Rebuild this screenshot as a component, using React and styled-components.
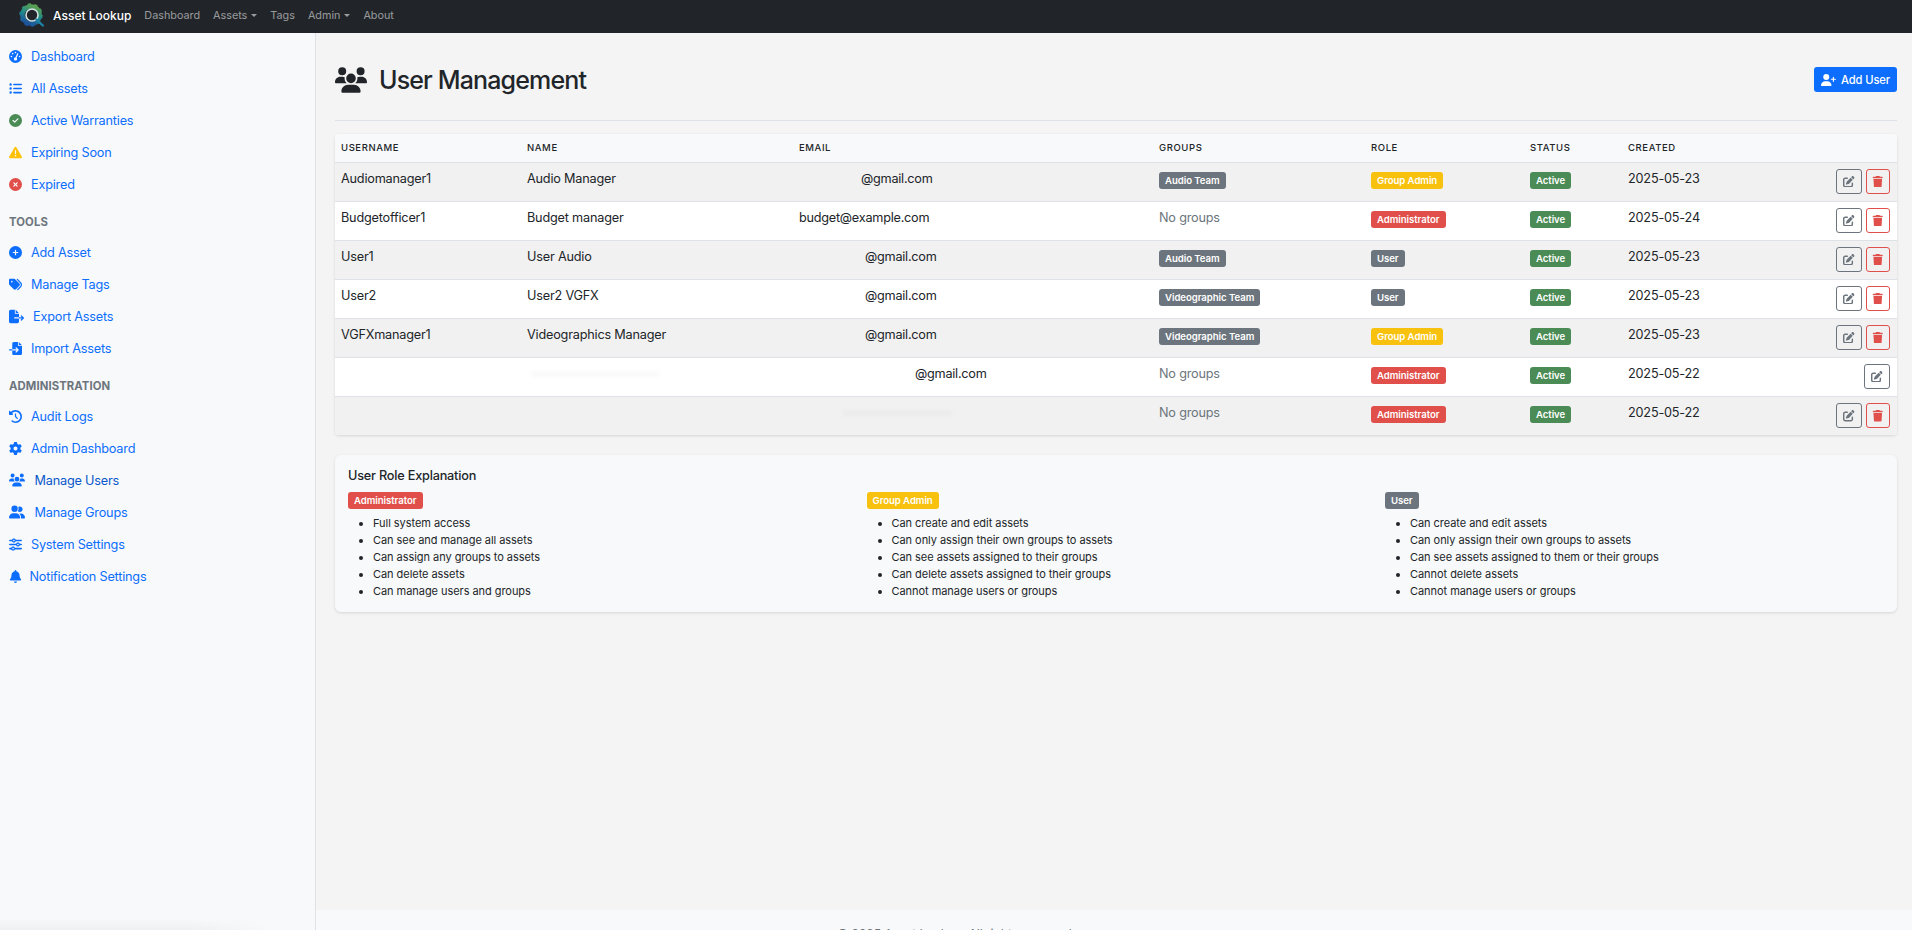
import React from "react";
import styled, { createGlobalStyle } from "styled-components";
import {
  FaGaugeHigh, FaListUl, FaCircleCheck, FaTriangleExclamation, FaCircleXmark, FaCirclePlus, FaTags,
  FaFileExport, FaFileImport, FaClockRotateLeft, FaGear, FaUsers, FaUserGroup, FaSliders, FaBell, FaUserPlus,
  FaPenToSquare, FaTrash,
} from "react-icons/fa6";

const GlobalStyle = createGlobalStyle`
  * { box-sizing: border-box; }
  html, body { margin: 0; height: 100%; overflow: hidden; }
  body {
    font-family: Inter, "Liberation Sans", sans-serif;
    font-size: 12.7px;
    letter-spacing: -0.2px;
    color: #212529;
    background: #f4f4f4;
  }
`;

const Navbar = styled.nav`
  height: 33px;
  background: #212529;
  display: flex;
  align-items: center;
  padding: 0 0 3px 19px;
`;

const Brand = styled.div`
  display: flex;
  align-items: center;
  gap: 8px;
  color: #fff;
  font-size: 12px;
  font-weight: 500;
  letter-spacing: 0;
  margin-right: 13px;
`;

const NavItem = styled.span`
  color: rgba(255, 255, 255, 0.55);
  font-size: 10.8px;
  letter-spacing: 0;
  margin-right: 13px;
  display: inline-flex;
  align-items: center;
`;

const Caret = styled.i`
  margin-left: 4px;
  border-top: 3.5px solid currentColor;
  border-left: 3.5px solid transparent;
  border-right: 3.5px solid transparent;
`;

const Shell = styled.div`
  display: flex;
  height: 897px;
`;

const Sidebar = styled.aside`
  position: relative;
  width: 316px;
  flex: none;
  background: #f8f9fa;
  border-right: 1px solid #dee2e6;
  padding-top: 7px;
  &::after {
    content: "";
    position: absolute;
    left: 0;
    bottom: 0;
    width: 270px;
    height: 12px;
    background: linear-gradient(to right, rgba(0, 0, 0, 0.035) 70%, transparent);
    -webkit-mask-image: linear-gradient(to bottom, transparent, #000);
    mask-image: linear-gradient(to bottom, transparent, #000);
  }
`;

const SideLink = styled.a`
  height: 32px;
  display: flex;
  align-items: center;
  padding-left: 9px;
  color: ${(p) => (p.$active ? "#0a58ca" : "#0d6efd")};
  svg {
    width: ${(p) => p.$size || 13}px;
    height: ${(p) => p.$size || 13}px;
    flex: none;
    color: ${(p) => p.$color || "#0d6efd"};
    margin-right: ${(p) => p.$gap || 9}px;
  }
`;

const SideHeading = styled.h6`
  margin: 15px 0 7px;
  height: 14px;
  padding-left: 9px;
  font-size: 11.3px;
  line-height: 14px;
  font-weight: 700;
  letter-spacing: 0.1px;
  color: #6c757d;
`;

const Main = styled.main`
  flex: 1;
  min-width: 0;
  display: flex;
  flex-direction: column;
`;

const Content = styled.div`
  height: 877px;
  flex: none;
  padding: 34px 15px 0 19px;
`;

const PageHeader = styled.header`
  height: 54px;
  display: flex;
  align-items: flex-start;
  justify-content: space-between;
  border-bottom: 1px solid #dee2e6;
`;

const Title = styled.h1`
  margin: 0;
  display: flex;
  align-items: center;
  gap: 12px;
  font-size: 25px;
  line-height: 26px;
  font-weight: 500;
  letter-spacing: -0.85px;
  svg { width: 32px; height: 26px; }
`;

const PrimaryButton = styled.button`
  display: inline-flex;
  align-items: center;
  gap: 5px;
  height: 25px;
  width: 83px;
  padding: 0 0 0 7px;
  border: none;
  border-radius: 3px;
  background: #0d6efd;
  color: #fff;
  font: 500 11.2px Inter, sans-serif;
  letter-spacing: -0.1px;
  svg { width: 15px; height: 12px; }
`;

const TableCard = styled.div`
  margin-top: 13px;
  background: #fff;
  border-radius: 4px;
  overflow: hidden;
  box-shadow: 0 1px 3px rgba(0, 0, 0, 0.12);
`;

const Table = styled.table`
  width: 100%;
  table-layout: fixed;
  border-collapse: collapse;
`;

const Th = styled.th`
  width: ${(p) => p.$w}px;
  height: 28px;
  padding: 0 6px;
  text-align: left;
  background: #f8f9fa;
  color: #212529;
  font-size: 9.5px;
  font-weight: 500;
  letter-spacing: 0.6px;
  text-transform: uppercase;
  border-bottom: 1px solid #dee2e6;
`;

const Tr = styled.tr`
  height: 39px;
  background: ${(p) => (p.$odd ? "#f1f1f1" : "#fff")};
  border-bottom: 1px solid #dee2e6;
  &:last-child { border-bottom: none; }
`;

const Td = styled.td`
  padding: 0 6px 6px;
  vertical-align: middle;
  white-space: nowrap;
`;

const BadgeCell = styled(Td)`
  padding: 0 6px 3px;
`;

const ActionCell = styled(Td)`
  padding: 0 7px 0 0;
`;

const Email = styled.span`
  display: block;
  letter-spacing: -0.25px;
  padding-left: ${(p) => p.$offset || 0}px;
`;

// leftover of the blurred-out text in the last rows
const Smudge = styled.span`
  display: block;
  height: 6px;
  width: ${(p) => p.$w}px;
  margin-left: ${(p) => p.$left}px;
  background: rgba(0, 0, 0, 0.025);
  filter: blur(2px);
`;

const Badge = styled.span`
  display: inline-block;
  padding: 0 6px;
  height: 17px;
  line-height: 17px;
  border-radius: 3px;
  font-size: 9.6px;
  font-weight: 600;
  letter-spacing: -0.05px;
  color: #fff;
  background: ${(p) => p.$bg};
`;

const Muted = styled.span`
  color: #6c757d;
  position: relative;
  top: -1.5px;
`;

const Actions = styled.div`
  display: flex;
  justify-content: flex-end;
  gap: 4px;
`;

const IconButton = styled.button`
  width: ${(p) => p.$w}px;
  height: 25px;
  padding: 0;
  display: flex;
  align-items: center;
  justify-content: center;
  background: transparent;
  border: 1px solid ${(p) => p.$color};
  border-radius: 3px;
  color: ${(p) => p.$color};
  svg { width: 11.5px; height: 11.5px; }
`;

const RoleCard = styled.section`
  margin-top: 20px;
  height: 157px;
  background: #f8f9fa;
  border-radius: 6px;
  padding: 13px 13px 0;
  box-shadow: 0 1px 3px rgba(0, 0, 0, 0.12);
`;

const RoleTitle = styled.h5`
  margin: 0 0 8px;
  font-size: 12.7px;
  line-height: 16px;
  font-weight: 500;
`;

const RoleGrid = styled.div`
  display: grid;
  grid-template-columns: repeat(3, 518.5px);
`;

const RoleList = styled.ul`
  margin: 6px 0 0;
  padding-left: 25px;
  font-size: 11px;
  letter-spacing: -0.05px;
  line-height: 17px;
`;

const Footer = styled.footer`
  height: 40px;
  flex: none;
  background: #f8f9fa;
  padding: 16px 316px 0 0;
  text-align: center;
  font-size: 12.2px;
  letter-spacing: -0.1px;
  color: #6c757d;
`;

const BrandLogo = () => (
  <svg width="26" height="24" viewBox="0 0 26 24">
    <defs>
      <linearGradient id="gearFill" x1="0.7" y1="0" x2="0.3" y2="1">
        <stop offset="0" stopColor="#5aa04e" />
        <stop offset="0.5" stopColor="#1f8a8c" />
        <stop offset="1" stopColor="#1c4f9c" />
      </linearGradient>
    </defs>
    <circle cx="12" cy="12" r="8.6" fill="none" stroke="url(#gearFill)" strokeWidth="4.5" />
    <circle cx="12" cy="12" r="10.4" fill="none" stroke="url(#gearFill)" strokeWidth="2.6" strokeDasharray="3.2 3.3" />
    <circle cx="13" cy="12" r="6" fill="#212529" stroke="#d5e2e2" strokeWidth="1.6" />
    <path d="M17.5 16.5l6.3 6" stroke="#1d83a8" strokeWidth="2.4" strokeLinecap="round" />
  </svg>
);

const topLinks = [
  { label: "Dashboard", icon: <FaGaugeHigh /> },
  { label: "All Assets", icon: <FaListUl /> },
  { label: "Active Warranties", icon: <FaCircleCheck />, color: "#4b8b55" },
  { label: "Expiring Soon", icon: <FaTriangleExclamation />, color: "#ffc107" },
  { label: "Expired", icon: <FaCircleXmark />, color: "#e04f4a" },
];
const toolLinks = [
  { label: "Add Asset", icon: <FaCirclePlus /> },
  { label: "Manage Tags", icon: <FaTags /> },
  { label: "Export Assets", icon: <FaFileExport />, size: 15, gap: 9 },
  { label: "Import Assets", icon: <FaFileImport /> },
];
const adminLinks = [
  { label: "Audit Logs", icon: <FaClockRotateLeft /> },
  { label: "Admin Dashboard", icon: <FaGear /> },
  { label: "Manage Users", icon: <FaUsers />, size: 16, gap: 9.5, active: true },
  { label: "Manage Groups", icon: <FaUserGroup />, size: 16, gap: 9.5 },
  { label: "System Settings", icon: <FaSliders /> },
  { label: "Notification Settings", icon: <FaBell />, gap: 7.5 },
];

const GREY = "#6c757d";
const RED = "#e04f4a";
const YELLOW = "#f7c10e";
const GREEN = "#4b8b55";

const users = [
  { username: "Audiomanager1", name: "Audio Manager", email: "@gmail.com", offset: 62, group: "Audio Team", role: "Group Admin", roleBg: YELLOW, created: "2025-05-23" },
  { username: "Budgetofficer1", name: "Budget manager", email: "budget@example.com", group: null, role: "Administrator", roleBg: RED, created: "2025-05-24" },
  { username: "User1", name: "User Audio", email: "@gmail.com", offset: 66, group: "Audio Team", role: "User", roleBg: GREY, created: "2025-05-23" },
  { username: "User2", name: "User2 VGFX", email: "@gmail.com", offset: 66, group: "Videographic Team", role: "User", roleBg: GREY, created: "2025-05-23" },
  { username: "VGFXmanager1", name: "Videographics Manager", email: "@gmail.com", offset: 66, group: "Videographic Team", role: "Group Admin", roleBg: YELLOW, created: "2025-05-23" },
  { username: "", name: <Smudge $w={128} $left={4} />, email: "@gmail.com", offset: 116, group: null, role: "Administrator", roleBg: RED, created: "2025-05-22", noDelete: true },
  { username: "", name: "", email: <Smudge $w={110} $left={-23} />, offset: 66, group: null, role: "Administrator", roleBg: RED, created: "2025-05-22" },
];

const roles = [
  { role: "Administrator", bg: RED, items: ["Full system access", "Can see and manage all assets", "Can assign any groups to assets", "Can delete assets", "Can manage users and groups"] },
  { role: "Group Admin", bg: YELLOW, items: ["Can create and edit assets", "Can only assign their own groups to assets", "Can see assets assigned to their groups", "Can delete assets assigned to their groups", "Cannot manage users or groups"] },
  { role: "User", bg: GREY, items: ["Can create and edit assets", "Can only assign their own groups to assets", "Can see assets assigned to them or their groups", "Cannot delete assets", "Cannot manage users or groups"] },
];

const renderLink = (l) => (
  <SideLink key={l.label} $color={l.color} $gap={l.gap} $size={l.size} $active={l.active}>
    {l.icon}
    {l.label}
  </SideLink>
);

export default function App() {
  return (
    <>
      <GlobalStyle />
      <Navbar>
        <Brand>
          <BrandLogo />
          Asset Lookup
        </Brand>
        <NavItem>Dashboard</NavItem>
        <NavItem>Assets<Caret /></NavItem>
        <NavItem>Tags</NavItem>
        <NavItem>Admin<Caret /></NavItem>
        <NavItem>About</NavItem>
      </Navbar>
      <Shell>
        <Sidebar>
          {topLinks.map(renderLink)}
          <SideHeading>TOOLS</SideHeading>
          {toolLinks.map(renderLink)}
          <SideHeading>ADMINISTRATION</SideHeading>
          {adminLinks.map(renderLink)}
        </Sidebar>
        <Main>
          <Content>
            <PageHeader>
              <Title><FaUsers />User Management</Title>
              <PrimaryButton><FaUserPlus />Add User</PrimaryButton>
            </PageHeader>
            <TableCard>
              <Table>
                <thead>
                  <tr>
                    <Th $w={186}>Username</Th>
                    <Th $w={272}>Name</Th>
                    <Th $w={360}>Email</Th>
                    <Th $w={212}>Groups</Th>
                    <Th $w={159}>Role</Th>
                    <Th $w={98}>Status</Th>
                    <Th $w={130}>Created</Th>
                    <Th />
                  </tr>
                </thead>
                <tbody>
                  {users.map((u, i) => (
                    <Tr key={i} $odd={i % 2 === 0}>
                      <Td>{u.username}</Td>
                      <Td>{u.name}</Td>
                      <Td><Email $offset={u.offset}>{u.email}</Email></Td>
                      <BadgeCell>
                        {u.group ? <Badge $bg={GREY}>{u.group}</Badge> : <Muted>No groups</Muted>}
                      </BadgeCell>
                      <BadgeCell><Badge $bg={u.roleBg}>{u.role}</Badge></BadgeCell>
                      <BadgeCell><Badge $bg={GREEN}>Active</Badge></BadgeCell>
                      <Td>{u.created}</Td>
                      <ActionCell>
                        <Actions>
                          <IconButton $w={26} $color={GREY}><FaPenToSquare /></IconButton>
                          {!u.noDelete && <IconButton $w={24} $color={RED}><FaTrash /></IconButton>}
                        </Actions>
                      </ActionCell>
                    </Tr>
                  ))}
                </tbody>
              </Table>
            </TableCard>
            <RoleCard>
              <RoleTitle>User Role Explanation</RoleTitle>
              <RoleGrid>
                {roles.map((r) => (
                  <div key={r.role}>
                    <Badge $bg={r.bg}>{r.role}</Badge>
                    <RoleList>
                      {r.items.map((it) => <li key={it}>{it}</li>)}
                    </RoleList>
                  </div>
                ))}
              </RoleGrid>
            </RoleCard>
          </Content>
          <Footer>© 2025 Asset Lookup. All rights reserved.</Footer>
        </Main>
      </Shell>
    </>
  );
}
